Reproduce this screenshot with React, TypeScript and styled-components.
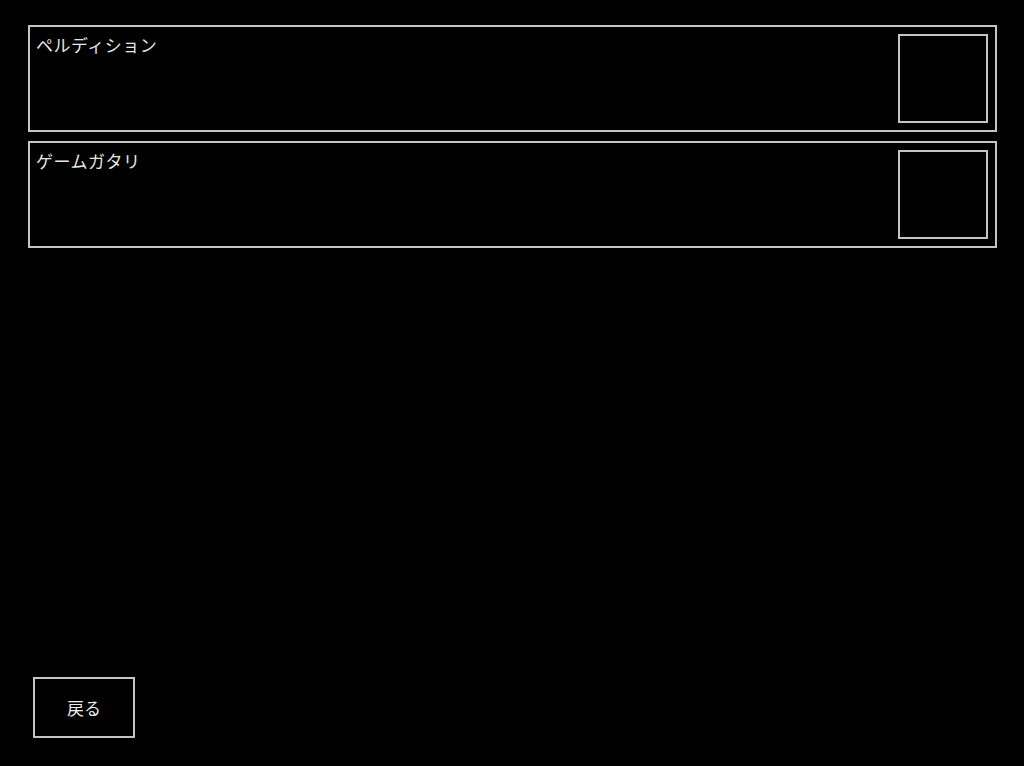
import React from "react";
import styled, { createGlobalStyle } from "styled-components";

const Global = createGlobalStyle`
  html, body { margin: 0; padding: 0; background: #000; }
  body { font-family: "Noto Sans CJK JP", "DejaVu Sans", sans-serif; }
  * { box-sizing: border-box; }
`;

const Page = styled.div`
  height: 766px;
  display: flex;
  flex-direction: column;
  padding: 25px 27px 28px 28px;
  background: #000;
`;

const List = styled.div`
  display: flex;
  flex-direction: column;
  gap: 9px;
  flex: 1;
`;

const Item = styled.div`
  height: 107px;
  border: 2px solid #c4c4c4;
  display: flex;
  align-items: flex-start;
  padding: 7px 7px 7px 6px;
`;

const Label = styled.div`
  flex: 1;
  color: #e6e6e6;
  font-size: 17px;
  line-height: 18px;
  letter-spacing: 0.5px;
  padding-top: 2px;
`;

const Thumb = styled.div`
  width: 90px;
  height: 89px;
  border: 2px solid #c4c4c4;
`;

const BackButton = styled.button`
  align-self: flex-start;
  margin-left: 5px;
  width: 102px;
  height: 61px;
  background: #000;
  border: 2px solid #c4c4c4;
  color: #ececec;
  font-family: "Noto Sans CJK JP", sans-serif;
  font-size: 17px;
  padding: 0;
  display: flex;
  align-items: center;
  justify-content: center;
`;

const items = ["ペルディション", "ゲームガタリ"];

export default function App() {
  return (
    <>
      <Global />
      <Page>
        <List>
          {items.map((t) => (
            <Item key={t}>
              <Label>{t}</Label>
              <Thumb />
            </Item>
          ))}
        </List>
        <BackButton>戻る</BackButton>
      </Page>
    </>
  );
}
